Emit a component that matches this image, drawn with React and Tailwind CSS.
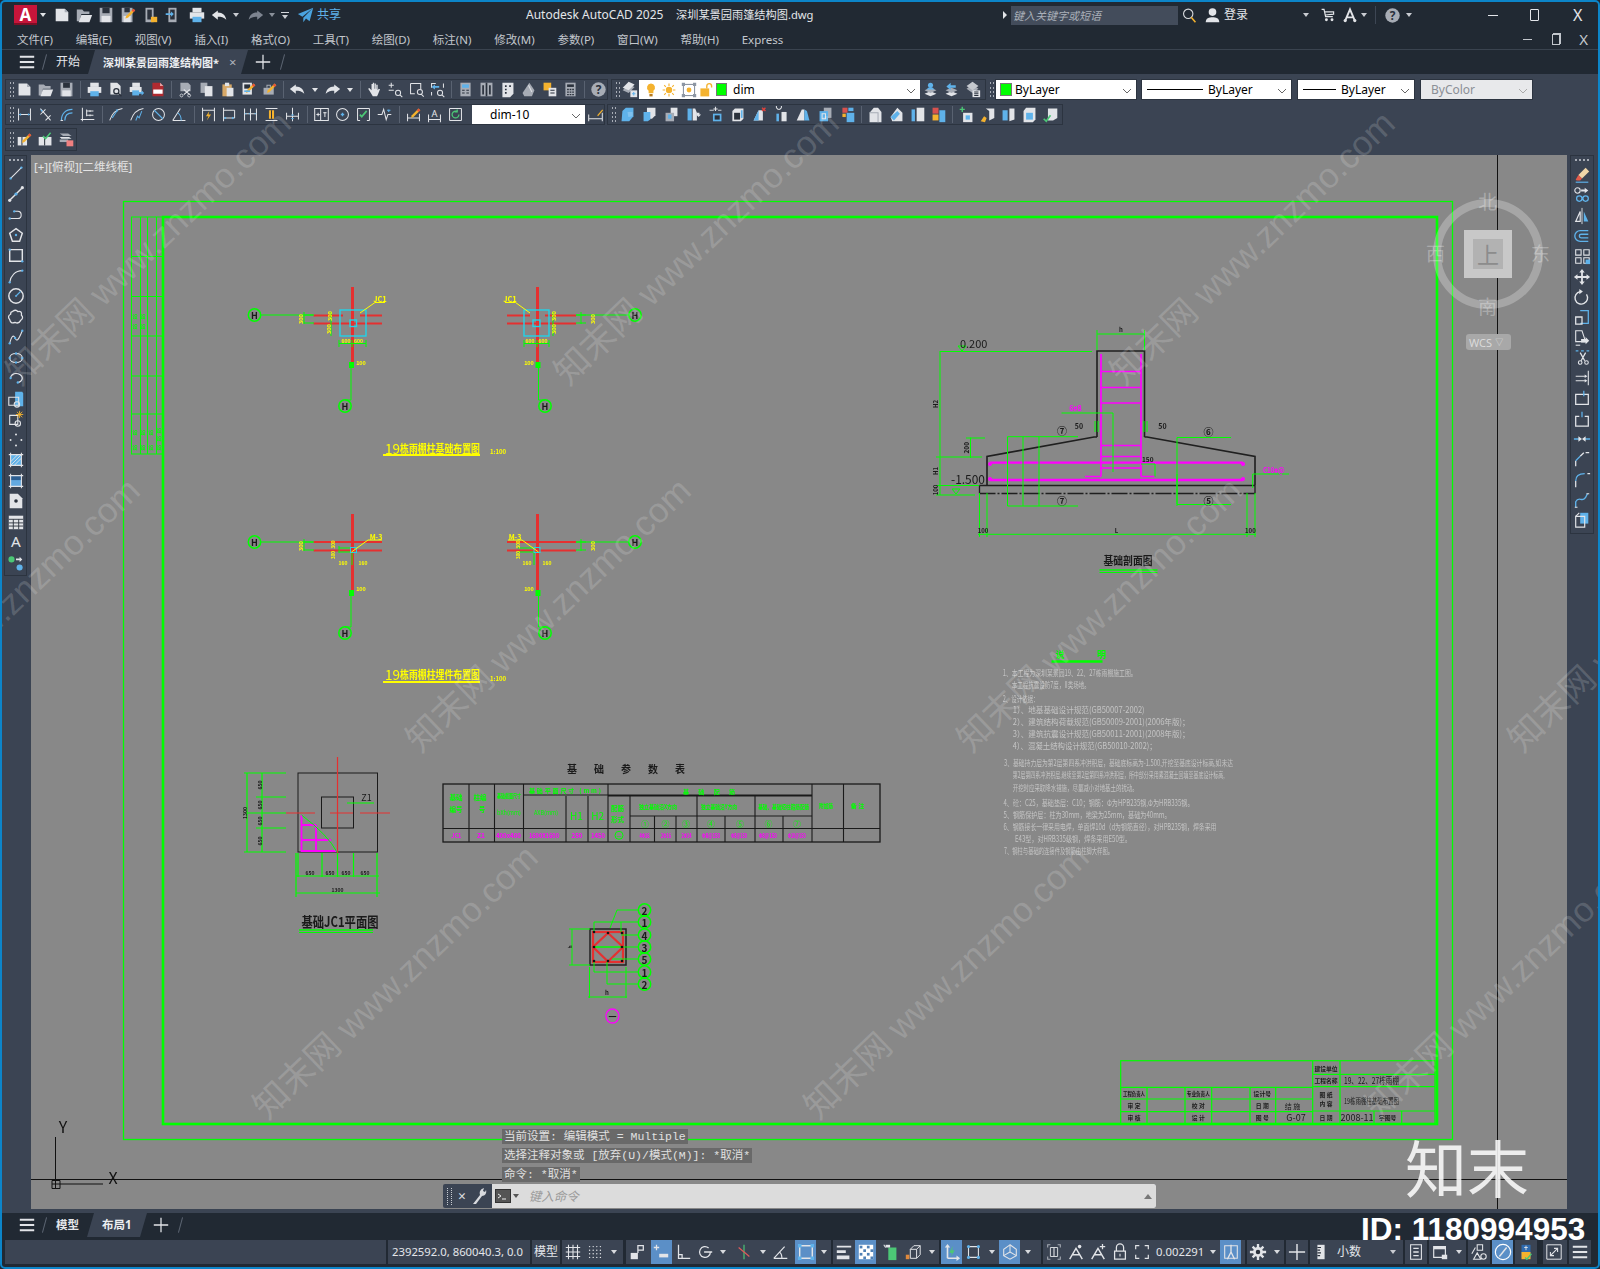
import React from 'react';

const W = '#e2e4e8', G = '#a7acb5', B = '#5fb2ea', Y = '#f4b22e', D = '#2a313c', R = '#d8524e', N = '#4cc776';
const f = (d, c = W) => <path d={d} fill={c} />;
const s = (d, c = W, w = 1.2) => <path d={d} stroke={c} strokeWidth={w} fill="none" />;
const o = (x, y, r = 1.3, c = B) => <circle cx={x} cy={y} r={r} fill={c} />;
const pen = <>{f('M16 3l2 2-8 8-3 1 1-3z', Y)}{f('M16 3l2 2-2 2-2-2z', '#e8503a')}</>;

const I = {
  new: <>{f('M3 3h10l4 4v10H3z')}{f('M13 3v4h4z', G)}</>,
  open: <>{f('M2 4h6l2 2h6v3H7l-2 8H2z', G)}{f('M7 10h12l-3 8H4z')}</>,
  save: <>{f('M3 2h14v16H3z', G)}{f('M6 2h8v6H6z', D)}{f('M5 11h10v7H5z')}</>,
  saveas: <>{f('M3 2h12v16H3z', G)}{f('M6 2h6v5H6z', D)}{f('M5 11h8v7H5z')}{pen}</>,
  phone: <>{f('M5 2h9v16H5z', G)}{f('M7 4h5v11H7z', D)}{f('M11 12h7v6h-7z', Y)}</>,
  phone2: <>{f('M6 2h9v16H6z', G)}{f('M8 4h5v11H8z', D)}{f('M3 8h6V6l3 3-3 3v-2H3z', B)}</>,
  print: <>{f('M5 2h10v5H5z')}{f('M2 7h16v7H2z')}{f('M5 12h10v6H5z', B)}</>,
  preview: <>{f('M4 2h8l4 4v10H4z')}{s('M14 12a3 3 0 1 1-6 0a3 3 0 1 1 6 0M13 14l4 4', D, 1.5)}</>,
  publish: <>{f('M5 2h9v5H5z')}{f('M2 7h14v6H2z')}{f('M5 11h8v6H5z', B)}{f('M12 13h4v-2l3 3-3 3v-2h-4z', B)}</>,
  dwf: <>{f('M4 2h9l4 4v12H4z', '#b02a30')}{f('M13 2v4h4z', '#e5a6a6')}<rect x="5" y="10" width="11" height="5" fill="#fff" /></>,
  cut: <>{f('M4 2h9l3 3v7H4z', G)}{s('M8 10l7 6M15 10l-7 6', W, 1.3)}{s('M7 17a1.7 1.7 0 1 0 0 .1M16 17a1.7 1.7 0 1 0 0 .1', W, 1)}</>,
  copy: <>{f('M3 2h8v12H3z', G)}{f('M8 6h9v12H8z')}</>,
  paste: <>{f('M4 4h11v14H4z', '#d7a867')}{f('M7 2h5v4H7z')}{f('M9 8h8v10H9z')}</>,
  match: <>{f('M3 2h11v14H3z')}{f('M5 4h7v5H5z', D)}{pen}{f('M5 11h7v2H5z', B)}</>,
  brush: <>{f('M3 8h12v8H3z', G)}{s('M7 8v-3h4v3', G)}{pen}</>,
  undo: f('M8 4L1 9.500 8 15v-3.500c4 0 7 .5 10 3.500-1-5-4-8.500-10-8.500z'),
  redo: f('M12 4l7 5.500L12 15v-3.500c-4 0-7 .5-10 3.500 1-5 4-8.500 10-8.500z'),
  redoG: f('M12 4l7 5.500L12 15v-3.500c-4 0-7 .5-10 3.500 1-5 4-8.500 10-8.500z', '#7d8490'),
  pan: f('M8 2h1.500v7H10V3h1.600v6h.5V4.500h1.600V11l1.300-2 1.500.6L14 16l-1 2H8l-3-5-2.500-4 1.400-.8L6.500 11V3.500H8z'),
  zoomrt: <>{s('M5 2v6M2 5h6M2 11h6', W)}{s('M16 14a3 3 0 1 1-6 0a3 3 0 1 1 6 0M15 16l3 3', W)}</>,
  zoomwin: <>{s('M3 3h12v7M3 3v12h5', W)}{s('M17 13a3 3 0 1 1-6 0a3 3 0 1 1 6 0M15.500 15.500l3 3', W)}</>,
  zoomprev: <>{s('M3 8V3h5M17 3v5M3 13v4', W)}{f('M12 6H7V4L3 7l4 3V8h5z', B)}{s('M16 14a3 3 0 1 1-6 0a3 3 0 1 1 6 0M15 16l3 3', W)}</>,
  propsb: <>{f('M4 2h12v16H4z', G)}{f('M6 4h8v4H6z', B)}{s('M6 11h3M11 11h3M6 14h3M11 14h3', D)}</>,
  sheet: <>{f('M3 2h14v16H3z', G)}{s('M10 2v16M6 5v11M14 5v11', D, 2)}</>,
  palette: <>{f('M4 2h13v13l-4 4H4z')}{s('M7 6h2M7 10h2M7 14h2M12 6h2', D, 2)}</>,
  paper: <>{f('M3 14L11 2l6 9-3 7H5z', G)}{s('M10 5l4 8', W)}</>,
  markup: <>{f('M3 2h9v9H3z', Y)}{f('M9 8h9v10H9z')}{s('M11 11h5M11 14h5', D)}</>,
  calc: <>{f('M4 2h12v16H4z', G)}{f('M6 4h8v3H6z', D)}{s('M6 10h2M9 10h2M12 10h2M6 13h2M9 13h2M12 13h2M6 16h2M9 16h2M12 16h2', D, 1.5)}</>,
  help: <><circle cx="10" cy="10" r="8.500" fill={G} /><text x="10" y="15" textAnchor="middle" fontSize="14" fontWeight="700" fill={D}>?</text></>,
  layer: <>{f('M2 11l7-7 7 3-7 7z', G)}{f('M2 8l7-7 7 3-7 7z')}{f('M11 11h8v8h-8z', W)}{s('M13 15h4M15 13v4', B)}</>,
  bulb: <>{f('M10 2a5 5 0 0 1 3 9v3H7v-3a5 5 0 0 1 3-9z', Y)}{f('M8 15h4v3H8z', '#b8791b')}</>,
  sun: <><circle cx="10" cy="10" r="4" fill={Y} />{s('M10 2v3M10 15v3M2 10h3M15 10h3M4 4l2 2M14 14l2 2M4 16l2-2M14 6l2-2', Y, 1.4)}</>,
  freeze: <>{s('M3 3h14v14H3z', '#7c8693')}{f('M1 1h4v4H1zM15 1h4v4h-4zM1 15h4v4H1zM15 15h4v4h-4z', '#8c96a3')}<circle cx="10" cy="10" r="3" fill={Y} /></>,
  lock: <>{s('M11 8V5a3 3 0 0 1 6 0v2', Y, 1.7)}{f('M3 8h11v10H3z', Y)}</>,
  lstack: <>{f('M3 15l7-3 7 3-7 3z')}{f('M3 11l7-3 7 3-7 3z', G)}<circle cx="10" cy="5" r="3" fill={B} />{f('M5 10q5-6 10 0z', B)}</>,
  lprev: <>{f('M3 15l7-3 7 3-7 3z')}{f('M3 11l7-3 7 3-7 3z', G)}{f('M9 2v3h6v3H9v3L4 6.500z', B)}</>,
  lstate: <>{f('M3 9l7-5 7 5-7 5z', G)}{f('M3 6l7-5 7 5-7 5z', '#c4c8ce')}{f('M10 11h9v8h-9z')}{s('M12 13h5M12 15h5M12 17h5', D)}</>,
  dlin: <>{s('M3 3v14M17 3v14M3 10h14', W)}{f('M3 10l3-1.500v3zM17 10l-3-1.500v3z', B)}</>,
  dali: <>{s('M4 3l12 14M4 10l6-6M10 17l6-6', W)}{f('M4 4l3 1-2 2z', B)}</>,
  darc: <>{s('M4 17C4 9 9 4 17 4M8 17C8 11 11 8 17 8', B, 1.4)}{s('M3 17h3', W)}</>,
  dord: <>{s('M4 2v16M2 16h16M9 6h8M9 11h8', W)}{s('M9 4v8M13 5v2M13 10v2', W)}</>,
  drad: <>{s('M2 17C5 8 10 4 17 3', W)}{s('M5 14l6-9', B)}{f('M9 4l3 0-1 3z', B)}</>,
  djog: <>{s('M2 17C5 8 10 4 17 3', W)}{s('M8 17l2-5 2 2 3-8', B)}</>,
  ddia: <>{s('M17 10a7 7 0 1 1-14 0a7 7 0 1 1 14 0', W)}{s('M5 5l10 10', B, 1.3)}</>,
  dang: <>{s('M2 17h15M2 17L11 3', W)}{s('M8 8c3 2 4 5 4 9', B)}</>,
  qdim: <>{s('M3 2v16M17 2v16M3 5h14', W)}{f('M11 6L7 12h3l-2 5 5-7h-3z', Y)}</>,
  dbase: <>{s('M3 2v16M16 5v9M3 5h13M3 14h13', W)}{f('M3 14l3-1.500v3zM16 14l-3-1.500v3z', B)}</>,
  dcont: <>{s('M3 3v14M10 3v14M17 3v14M3 9h14', W)}{f('M3 9l2-1v2zM10 9l-2-1v2zM17 9l-2-1v2z', B)}</>,
  dspace: <>{s('M3 3h14M3 17h14', W)}{f('M7 5h6v10H7z', Y)}{s('M10 5v10', D)}</>,
  dbreak: <>{s('M10 2v16M3 12h14M3 8v8M17 8v8', W)}{f('M10 12l-2-2h4zM10 16l-2-2h4z', B)}</>,
  tol: <>{s('M2 3h16v14H2z', W)}{s('M9 3v14', W)}{s('M4 10h4M6 8v4M12 8h4M14 7v6', W)}</>,
  cmark: <>{s('M17 10a7 7 0 1 1-14 0a7 7 0 1 1 14 0', W)}{s('M8 10h4M10 8v4', B, 1.5)}</>,
  insp: <>{s('M3 3h14M3 17h3M14 17h3M3 3v14M17 3v14', W)}{f('M8 14l-3-3 1.500-1.500L8 11l5-6 1.500 1.500z', N)}</>,
  jog: <>{s('M2 10h5l2-6 3 12 2-6h4', W)}{s('M15 4v3M13 5h4', B)}</>,
  dedit: <>{s('M3 9v9M17 9v9M3 14h14', W)}{pen}</>,
  dtext: <>{s('M3 10v9M17 10v9M3 16h14', W)}<text x="10" y="13" textAnchor="middle" fontSize="11" fill={W}>A</text></>,
  dupd: <>{s('M3 3h14M3 17h14M3 3v14M17 3v14', W)}{s('M14 10a4 4 0 1 1-2-3.400M12 4v3h-3', N, 1.5)}</>,
  dstyle: <>{s('M2 10v8M18 8v10M2 15h16', W)}{f('M12 11l6-7 1 1-6 7z', Y)}</>,
  box1: <>{f('M4 6l4-4h9v10l-5 6H3z', B)}{f('M10 7h6v5l-5 1z', '#7fc2f0')}</>,
  box2: <>{f('M7 2h10v9l-4 4H7z')}{f('M3 7h8v9l-3 2H3z', B)}</>,
  box3: <>{f('M9 2h8v10H9z', W)}{f('M3 8h10v10H3z', G)}{f('M6 10h4v5H6z', B)}</>,
  slice: <>{f('M3 3h5v14H3z', B)}{f('M9 3h3l2 5v9H9z', W)}{f('M14 8h3v2h2l-3 3-3-3h1z', W)}</>,
  addm: <>{s('M10 1v5M7.500 3.500h5', W, 1.3)}{s('M3 5h5M13 5h4', W, 1)}{f('M7 9h10v9H7z', B)}{f('M9 11h6v5H9z', D)}</>,
  cube: <>{f('M4 6l3-3h10v12l-3 3H4z', W)}{f('M6 8h7v8H6z', D)}{f('M14 5h2v9h-2z', B)}</>,
  cubex: <>{f('M3 17L9 5l5 0v12z', W)}{f('M3 17l6-12v12z', B)}{s('M13 2l4 4M17 2l-4 4', '#e2423c', 1.6)}</>,
  rev: <>{s('M7 4a3 3 0 1 0-.1 0', W)}{f('M10 7h6v11h-6z', W)}{f('M4 9h3v9H4z', B)}</>,
  cone: <>{f('M2 17l6-13 3 0v13z', W)}{f('M11 4l3 2 3 11h-6z', B)}</>,
  cube2: <>{f('M8 2h9v12H8z', G)}{f('M3 6h10v12H3z', B)}{s('M6 9h4v6H6z', W)}</>,
  cube3: <>{f('M4 2h6v6H4z', R)}{f('M11 2h6v4h-6z', B)}{f('M9 8h9v11H9z', B)}{f('M4 9h4v4H4z', Y)}</>,
  solid1: <>{f('M3 8l5-6h5l4 5v12H3z', W)}{s('M3 8h10v11', G)}</>,
  solid2: <>{f('M3 13l8-11 6 6v10H5z', W)}{f('M3 13l8-7 3 3-7 8z', B)}</>,
  solid3: <>{f('M9 2h9v16H9z', W)}{f('M3 4h4v14H3z', B)}</>,
  solid4: <>{f('M3 2h7v7H3z', R)}{f('M3 10h7v7H3z', Y)}{f('M11 5h7v14h-7z', B)}</>,
  plus1: <>{s('M5 1v6M2 4h6', N, 1.6)}{f('M6 8h11v11H6z', W)}{f('M9 11h5v5H9z', B)}</>,
  broom: <>{f('M8 3h10v11l-6 3V6z', W)}{f('M2 18l4-6 3 2-2 5z', Y)}</>,
  split: <>{f('M3 5h6v12H3z', B)}{f('M11 3h6v13l-6 2z', W)}</>,
  vcube: <>{f('M3 6l3-4h11v14l-3 3H3z', W)}{f('M6 8h8v8H6z', B)}</>,
  chk: <>{f('M7 3h11v11l-5 3H7z', W)}{s('M2 15l3 3 5-7', N, 2)}</>,
  plate: <>{f('M2 7h11v10H2z')}{s('M7 7v10', D)}{pen}</>,
  platechk: <>{f('M2 7h15v10H2z')}{s('M9 7v10', D)}{s('M7 6l3 3 6-7', N, 1.8)}</>,
  plate2: <>{f('M2 3h10l4 3-10 0z', G)}{f('M2 7h11l3 2H4z')}{f('M2 10h10v3H2z', G)}{f('M10 11h8v7h-8z', '#f08080')}</>,
  line: <>{s('M4 16L16 4')}{o(4, 16)}{o(16, 4)}</>,
  ray: <>{s('M3 17L17 3', W, 1.6)}{o(10, 10, 1.8)}{o(3, 17, 1.8, W)}{o(17, 3, 1.8, W)}</>,
  pline: <>{s('M3 15h9c5 0 5-8 0-8H8')}{o(3, 15)}{o(8, 7)}</>,
  pgon: <>{s('M10 3l7 5-3 9H6L3 8z', W, 1.6)}{o(10, 10)}</>,
  rect: <>{s('M3 4h14v13H3z', W, 1.6)}{o(3, 4)}{o(17, 17)}</>,
  arc: <>{s('M3 17C4 10 9 4 17 4')}{o(3, 17)}{o(17, 4)}</>,
  circ: <>{s('M18 10a8 8 0 1 1-16 0a8 8 0 1 1 16 0', W, 1.6)}{s('M10 10l5-5', B)}{o(10, 10, 1)}</>,
  cloud: s('M6 4q4-3 6 0q5-1 4 4q3 3-1 6q-2 4-6 2q-5 2-6-3q-3-4 1-6q0-3 2-3z', W, 1.4),
  spline: <>{s('M3 17c2-8 4-10 6-6s3 4 8-8', W)}{o(3, 17)}{o(9, 11)}{o(17, 3)}</>,
  ell: <>{s('M17 10c0 3-3 5-7 5s-7-2-7-5 3-5 7-5 7 2 7 5z', W, 1.3)}{o(3, 10)}{o(17, 10)}{o(10, 5)}{o(10, 15)}</>,
  ella: <>{s('M4 10c0-3 3-5 6-5s7 2 7 5-3 5-5 5', W, 1.3)}{o(4, 10)}{o(12, 15)}</>,
  ins: <>{f('M9 2h8l1 2v14H9z', B)}{s('M2 8h11v9H2z', W)}{s('M14 16a3 3 0 1 1-6 0a3 3 0 1 1 6 0', W)}</>,
  blk: <>{s('M3 6h9v10H3z', W)}{s('M15 15a3 3 0 1 1-6 0a3 3 0 1 1 6 0', W)}{s('M14 1v8M10 5h8M11 2l6 6M17 2l-6 6', Y, 1)}</>,
  point: <>{o(10, 4, 1.1, W)}{o(4, 10, 1.1, W)}{o(16, 10, 1.1, W)}{o(10, 16, 1.1, W)}</>,
  hatch: <>{f('M4 4h12v12H4z', B)}{s('M4 12l8-8M4 16l12-12M8 16l8-8', W, 1)}{s('M2 4h16M2 16h16M4 2v16M16 2v16', W)}</>,
  grad: <>{f('M4 4h12v12H4z', '#63a9e0')}{f('M4 4h12v5H4z', '#2d5f92')}{s('M2 4h16M2 16h16M4 2v16M16 2v16', W)}</>,
  region: <>{f('M3 2h9l5 5v11H3z')}<circle cx="10" cy="10" r="2" fill={D} /></>,
  table: <>{f('M2 3h16v15H2z')}{s('M2 7h16M2 11h16M2 14.500h16M7 7v11M13 7v11', D, 1)}</>,
  txt: <text x="10" y="16" textAnchor="middle" fontSize="17" fill={W}>A</text>,
  addsel: <>{o(5, 6, 3.400, N)}{o(14, 15, 3.400, B)}{f('M10 5h4V3l3 3-3 3V7h-4z')}</>,
  erase: <>{f('M14 2l4 4-8 8-4-4z', '#f0d6a8')}{f('M6 10l4 4-2 2H4l-1-1z', '#e35b4a')}{s('M3 18h14', B, 1.3)}</>,
  rcopy: <>{s('M8 5a3 3 0 1 1-6 0a3 3 0 1 1 6 0', W)}{f('M9 4h4V2l4 3-4 3V6H9z')}{s('M10 14a3 3 0 1 1-6 0a3 3 0 1 1 6 0M17 14a3 3 0 1 1-6 0a3 3 0 1 1 6 0', B, 1.4)}</>,
  mirror: <>{s('M10 1v18', W, 1)}{s('M8 5v11H3z', W, 1.3)}{f('M12 5v11h5z', B)}</>,
  offset: s('M17 4H8a6 6 0 0 0 0 12h9M17 8H9a2 2 0 0 0 0 4h8', B, 1.5),
  array: <>{s('M3 3h6v6H3zM12 3h6v6h-6zM3 12h6v6H3zM12 12h6v6h-6z', W, 1.2)}{f('M14 14h5v5h-5z', B)}</>,
  move: f('M10 1l3 4h-2v4h4V7l4 3-4 3v-2h-4v4h2l-3 4-3-4h2v-4H5v2l-4-3 4-3v2h4V5H7z'),
  rotate: <>{s('M15 7a7 7 0 1 1-7-3', W, 1.5)}{f('M7 1l4 3-4 3z')}</>,
  scale: <>{s('M8 3h9v14H8', B, 1.4)}{s('M3 10h7v8H3z', W, 1.4)}</>,
  stretch: <>{s('M3 2h7l4 12H3z', W)}{f('M9 11h5V9l4 4-4 4v-2H9z')}{s('M3 18h5', W)}</>,
  trim: <>{s('M3 2h3M9 2h3M15 2h3', B, 1.3)}{s('M8 4l5 9M14 4l-5 9', W, 1.4)}{s('M10 15a2 2 0 1 1-4 0a2 2 0 1 1 4 0M17 15a2 2 0 1 1-4 0a2 2 0 1 1 4 0', W)}</>,
  extend: <>{s('M17 2v16', W)}{s('M3 8h11M3 13h11', W)}{f('M13 6l3 2-3 2zM13 11l3 2-3 2z', W)}</>,
  brkp: <>{s('M3 6h14v11H3z', W, 1.4)}{s('M12 2v6', B, 1.4)}</>,
  brk: <>{s('M7 7H3v11h14V7h-4', W, 1.4)}{s('M10 2v6', B, 1.4)}</>,
  join: <>{s('M1 10h6M13 10h6', B, 1.6)}{f('M6 7l4 3-4 3zM14 7l-4 3 4 3z', W)}</>,
  chamfer: <>{s('M3 18v-6M8 7l4-4M14 3h4', W, 1.4)}{s('M3 12l5-5', B, 1.4)}</>,
  fillet: <>{s('M3 18v-7M16 3h3', W, 1.4)}{s('M3 11q0-8 10-8', B, 1.4)}</>,
  blend: <>{s('M3 18v-6c4-8 8 4 13-9', B, 1.5)}{s('M15 3h3M2 18h3', W)}</>,
  explode: <>{f('M8 2h9v12H8z', B)}{s('M3 6h10v12H3z', W, 1.3)}{s('M7 2l-4 4', W)}</>,
  grid: s('M5 2v16M10 2v16M15 2v16M2 5h16M2 10h16M2 15h16', W, 1.2),
  snap: <>{[4, 8, 12, 16].map(y => [4, 8, 12, 16].map(x => <circle key={x + '-' + y} cx={x} cy={y} r=".8" fill={W} />))}</>,
  infer: <>{f('M3 11h8v7H3z')}{s('M11 11V3h6v5h-6', W, 1.4)}</>,
  dyn: <>{s('M5 2v6M2 5h6', W, 1.4)}{f('M8 12h10v4H8z')}</>,
  ortho: s('M5 2v15h13M5 13h4v4', W, 1.4),
  polar: <>{s('M16 10a6 6 0 1 1-2-4.500M9 10h9', W, 1.4)}</>,
  iso: <>{s('M10 2v16', N, 1.3)}{s('M4 5l12 10', '#e05b5b', 1.3)}</>,
  ang: s('M2 17h15M2 17L14 4M8 10c2 1 3 4 3 7', W, 1.3),
  ucsb: <>{s('M3 3h14v14H3z', W, 1.6)}{f('M1 1h4v4H1zM15 1h4v4h-4zM1 15h4v4H1zM15 15h4v4h-4z', B)}</>,
  lw: <>{f('M2 3h16v2H2zM2 8h10v3H2zM2 14h14v4H2z')}</>,
  trans: <><rect x="2" y="2" width="16" height="16" fill="#fff" />{[3, 7, 11, 15].map(y => [3, 7, 11, 15].map(x => (x + y) % 8 === 6 ? <rect key={x + '-' + y} x={x} y={y} width="3" height="3" fill="#4f80b5" /> : null))}</>,
  cycle: <>{s('M2 2l2 3', W)}{f('M7 5h9v14H7z', N)}{f('M4 2h5v3H4z', W)}</>,
  o3d: <>{s('M7 7l4-4h7v10l-4 4H7zM7 7h7v10M14 7l4-4', W, 1.1)}{f('M2 13h4v5H2z', '#e0893c')}</>,
  ducs: <>{s('M5 17V4M5 17h12', W, 1.8)}{f('M5 1l3 4H2zM19 17l-4 3v-6z')}{f('M11 3L7 11h3l-1 4 4-7h-3z', N)}</>,
  filt: <>{s('M5 4h11v12H5z', W, 1.2)}{o(5, 4, 1.7)}{o(16, 4, 1.7)}{o(5, 16, 1.7)}{o(16, 16, 1.7)}</>,
  gizmo: <>{s('M10 2l7 5v7l-7 4-7-4V7z', W, 1.2)}{s('M10 10V2M10 10l7 4M10 10l-7 4', W, 1.2)}</>,
  ann: <>{s('M3 5V2h3M14 2h3v3M3 15v3h3M14 18h3v-3', G, 1.2)}{s('M6 5h8v10H6z', W, 1)}{s('M10 5v10', W)}</>,
  annA: <>{s('M3 18l7-12 7 12M6 13h8', W, 1.6)}<circle cx="14" cy="4" r="2" fill={W} /></>,
  annB: <>{s('M3 18l7-12 7 12M6 13h8', W, 1.6)}{s('M15 1v6M12 4h6', W, 1.4)}</>,
  lockS: <>{s('M6 9V5a4 4 0 0 1 8 0v4', W, 1.4)}{s('M4 9h12v9H4z', W, 1.4)}{s('M10 12v3', W)}</>,
  fulls: s('M3 7V3h4M13 3h4v4M3 13v4h4M13 17h4v-4', W, 1.3),
  annb: <>{s('M3 3h14v14H3z', W, 1.2)}{s('M6 18l4-8 4 8M10 2v8', W, 1.5)}</>,
  gear: <><circle cx="10" cy="10" r="5.500" fill={W} />{s('M10 1v18M1 10h18M4 4l12 12M16 4L4 16', W, 2.6)}<circle cx="10" cy="10" r="2.500" fill={D} /></>,
  plus: s('M10 1v18M1 10h18', W, 1.6),
  ruler: <>{f('M6 2h8v16H6z', W)}{s('M6 5h4M6 8h3M6 11h4M6 14h3', D, 1.3)}</>,
  qprop: <>{s('M4 2h12v16H4z', W, 1.2)}{s('M7 6h6M7 10h6M7 14h6', W, 1.4)}</>,
  lay: <>{s('M3 4h13v12H3z', W, 1.3)}{f('M3 4h13v3H3z')}{f('M12 13h6v5h-6z', W)}</>,
  iso2: <>{s('M8 2h6v6H8zM2 12l4-7M4 18l4-7 4 7z', W, 1.2)}{s('M18 15a3 3 0 1 1-6 0a3 3 0 1 1 6 0', W, 1.2)}</>,
  hw: <><circle cx="10" cy="10" r="8.500" fill="none" stroke="#fff" strokeWidth="1.300" />{s('M6 15L14 5', W, 1.6)}</>,
  clean: <>{f('M5 2h10v14H5z', '#2f6aae')}{f('M5 10h10v8H5z', Y)}{s('M9 16l2 2 5-6', N, 1.6)}{s('M10 3v5M8 5h4', W, 1)}</>,
  fit: <>{s('M2 2h16v16H2z', W, 1.1)}{s('M6 14l8-8M10 6h4v4M6 10v4h4', W, 1.2)}</>,
  menu: f('M2 3h16v2.400H2zM2 8.800h16v2.400H2zM2 14.600h16V17H2z'),
  mag: <>{s('M14 8a5.500 5.500 0 1 1-11 0a5.500 5.500 0 1 1 11 0', '#d8dade', 1.3)}{s('M12 12l5 6', Y, 1.8)}</>,
  person: <><circle cx="10" cy="6" r="4.500" fill={W} />{f('M2 18c0-5 4-6 8-6s8 1 8 6z')}</>,
  cart: <>{s('M2 3h3l2 9h9M5 6h12v3l-10 1', W, 1.5)}<circle cx="8" cy="16" r="1.800" fill={W} /><circle cx="15" cy="16" r="1.800" fill={W} /></>,
  acad: <>{s('M4 17L10 3l6 14M6 13h8', W, 2.4)}<circle cx="4" cy="17" r="2" fill={W} /><circle cx="16" cy="17" r="2" fill={W} /></>,
  plane: f('M18 2L1 9l5 3zM18 2L7 13v5l3-4 4 3z', '#4aa3df'),
};

const Ic = ({ n, s: z = 20 }) => <svg width={z} height={z} viewBox="0 0 20 20" className="shrink-0">{I[n]}</svg>;
const Cr = ({ c = 'border-t-[#c9ccd2]' }) => <span className={`block w-0 h-0 border-x-[3px] border-x-transparent border-t-[4px] ${c}`} />;
const T = ({ n, z = 17 }) => <span className="w-[21px] h-full flex items-center justify-center shrink-0"><Ic n={n} s={z} /></span>;
const T22 = ({ n }) => <span className="w-[22px] h-full flex items-center justify-center shrink-0"><Ic n={n} s={17} /></span>;
const Sp = ({ w8 }) => <span className={`${w8 ? 'w-[8px]' : 'w-[7px]'} h-full flex items-center justify-center shrink-0`}><span className="w-px h-[17px] bg-[#596271]" /></span>;
const TC = () => <span className="w-[14px] h-full flex items-center justify-center shrink-0"><Cr c="border-t-[#e2e4e8]" /></span>;
const Grip = () => <span className="w-[8px] h-[15px] shrink-0 ml-[2px] border-x-2 border-dotted border-[#a7acb5] mr-[-2px] scale-x-50" />;
const Bar = ({ className, children }) => <div className={`flex items-center h-full border border-[#2c3440] bg-[#3b4453] ${className}`}>{children}</div>;
const Sel = ({ className, children }) => (
  <div className={`relative flex items-center h-full bg-white text-black text-[12px] ${className}`}>
    {children}
    <svg width="10" height="6" viewBox="0 0 10 6" className="absolute right-[4px] top-[8px]"><path d="M1 1l4 4 4-4" stroke="#666" fill="none" /></svg>
  </div>
);

const Blue = ({ n }) => <span className="w-[21px] h-full flex items-center justify-center bg-[#5b8fc7] shrink-0"><Ic n={n} s={18} /></span>;
const SI = ({ n }) => <span className="w-[22px] h-full flex items-center justify-center shrink-0"><Ic n={n} s={18} /></span>;
const SC = () => <span className="w-[15px] h-full flex items-center justify-center shrink-0"><Cr c="border-t-[#d8dade]" /></span>;
const Grp = ({ className, children }) => <div className={`flex items-center h-full bg-[#3b4453] shrink-0 ${className || ''}`}>{children}</div>;

const LEFT = ['line', 'ray', 'pline', 'pgon', 'rect', 'arc', 'circ', 'cloud', 'spline', 'ell', 'ella', 'ins', 'blk', 'point', 'hatch', 'grad', 'region', 'table', 'txt', 'addsel'];
const RIGHT = ['erase', 'rcopy', 'mirror', 'offset', 'array', 'move', 'rotate', 'scale', 'stretch', 'trim', 'extend', 'brkp', 'brk', 'join', 'chamfer', 'fillet', 'blend', 'explode'];
const MENU = ['文件(F)', '编辑(E)', '视图(V)', '插入(I)', '格式(O)', '工具(T)', '绘图(D)', '标注(N)', '修改(M)', '参数(P)', '窗口(W)', '帮助(H)', 'Express'];
const MARKS = [[12, 378], [560, 378], [1116, 378], [-139, 745], [412, 745], [963, 745], [1514, 745], [-292, 1112], [259, 1112], [810, 1112], [1371, 1112]];

/* ---- drawing helpers ---- */
const GRN = '#00ff00', YEL = '#ffff00', RED = '#e53030', MAG = '#ff00ff', CY = '#22d3e8', BK = '#1a1a1a';
const Tx = ({ x, y, z = 6, c = YEL, w, r, b, sp, a = 'middle', children }) => (
  <text x={x} y={y} fontSize={z} fill={c} textAnchor={a} dominantBaseline="central" fontWeight={b ? 700 : 400}
    textLength={w} lengthAdjust={w ? (sp ? 'spacing' : 'spacingAndGlyphs') : undefined} transform={r ? `rotate(${r} ${x} ${y})` : undefined}>{children}</text>
);
const Ln = ({ d, c = GRN, w = 1 }) => <path d={d} stroke={c} strokeWidth={w} fill="none" />;
const Bub = ({ x, y, t, c = GRN, z = 9 }) => <><circle cx={x} cy={y} r="6.200" fill="none" stroke={c} strokeWidth="1.500" /><Tx x={x} y={y} z={z} c={BK} b>{t}</Tx></>;
const Title19 = ({ y, t }) => <>
  <Tx x={385} y={y} z={14} w={15} a="start">19</Tx>
  <Tx x={400} y={y} z={11} w={80} a="start" b>{t}</Tx>
</>;

function Drawing() {
  return (
    <svg viewBox="31 155 1536 1054" className="absolute inset-0 w-full h-full blur-[0.3px] [font-family:'Noto_Sans_CJK_SC','Noto_Sans',sans-serif]">
      {/* frames */}
      <rect x="123.500" y="201.500" width="1329" height="938" fill="none" stroke={GRN} strokeWidth="1.300" />
      <rect x="163" y="217" width="1274" height="907" fill="none" stroke={GRN} strokeWidth="2.600" />
      {/* revision strip */}
      <Ln d="M131.500 217V454M140.500 217V454M147.500 217V454M156.500 217V454M131 217H163M131 256.500H163M131 296.500H163M131 336H163M131 376H163M131 414H163M131 454H163" />
      {[[135, 315], [143, 315], [135, 325], [143, 325], [135, 431], [143, 431], [151, 431], [159, 429], [135, 446], [143, 446], [151, 446], [159, 437], [159, 446]].map(([x, y]) => <Tx key={x + '.' + y} x={x} y={y} z={5} c={GRN} b>设</Tx>)}

      {/* plan 1 */}
      <Ln d="M352.500 287V364" c={RED} w={3} />
      <Ln d="M313.500 315.500H343M360 315.500H382M313.500 323.500H382" c={RED} w={1.800} />
      <Ln d="M261 315H313M351 364V400M345 400H351" />
      <Ln d="M304 312V324M304 315H314M304 323H314M331 312V336M339 343.500H366M339 340V347M352 340V347M366 340V347" w={1} />
      <rect x="340" y="310" width="26" height="26" fill="none" stroke={CY} strokeWidth="1.400" />
      <rect x="350" y="320" width="6.500" height="6.500" fill="none" stroke={CY} strokeWidth="1.400" />
      <Ln d="M360 313L375 302.500H385" c={YEL} />
      <Tx x={380} y={298} z={7.500} b>JC1</Tx>
      <Bub x={254.500} y={315} t="H" /><Bub x={345} y={406} t="H" />
      <Tx x={301} y={319} z={5.500} r={-90} b>300</Tx><Tx x={329.500} y={316} z={5.500} r={-90} b>300</Tx><Tx x={328.700} y={329} z={5.500} r={-90} b>300</Tx>
      <Tx x={346} y={340} z={5} b>600</Tx><Tx x={358.500} y={340} z={5} b>600</Tx><Tx x={361} y={362.500} z={5.500} b>100</Tx>
      <rect x="349" y="362" width="5" height="6" fill={GRN} />

      {/* plan 2 */}
      <Ln d="M537.500 287V364" c={RED} w={3} />
      <Ln d="M507 315.500H530M545 315.500H576M507 323.500H576" c={RED} w={1.800} />
      <Ln d="M576 315H629M538.500 364V400M538.500 400H545" />
      <Ln d="M581 312V324M576 315H586M576 323H586M553 312V336M524 343.500H549M524 340V347M537 340V347M549 340V347" w={1} />
      <rect x="524" y="310" width="25" height="26" fill="none" stroke={CY} strokeWidth="1.400" />
      <rect x="533" y="320" width="7" height="6.500" fill="none" stroke={CY} strokeWidth="1.400" />
      <Ln d="M530 313L515.500 302.500H505" c={YEL} />
      <Tx x={510} y={298} z={7.500} b>JC1</Tx>
      <Bub x={635} y={315} t="H" /><Bub x={545} y={406} t="H" />
      <Tx x={593} y={319} z={5.500} r={-90} b>300</Tx><Tx x={554} y={316} z={5.500} r={-90} b>300</Tx><Tx x={554} y={329} z={5.500} r={-90} b>300</Tx>
      <Tx x={530} y={340} z={5} b>600</Tx><Tx x={543} y={340} z={5} b>600</Tx><Tx x={529} y={362.500} z={5.500} b>100</Tx>
      <rect x="535.500" y="362" width="5" height="6" fill={GRN} />

      {/* title 1 */}
      <Title19 y={448} t="栋雨棚柱基础布置图" />
      <Ln d="M383 455H480" c={YEL} w={2} />
      <Tx x={498} y={451} z={6} b>1:100</Tx>

      {/* plan 3 */}
      <Ln d="M352.500 514V593" c={RED} w={3} />
      <Ln d="M313.500 542H382M313.500 550.500H382" c={RED} w={1.800} />
      <Ln d="M261 542H313M351 593V627M345 627H351" />
      <Ln d="M304 539V551M304 542H314M304 550H314M339 548H350M339 552H350M339 546V553M352 552V565" w={1} />
      <rect x="350.500" y="547.500" width="6" height="5" fill="none" stroke={CY} />
      <Ln d="M351.500 552L368 540H382" c={YEL} />
      <Tx x={376} y={537} z={7} b>M-3</Tx>
      <Bub x={254.500} y={542} t="H" /><Bub x={345} y={633} t="H" />
      <Tx x={301} y={546} z={5.500} r={-90} b>300</Tx><Tx x={333} y={544.500} z={4.500} r={-90} b>300</Tx><Tx x={333} y={555} z={4.500} r={-90} b>300</Tx>
      <Tx x={343} y={562} z={5} b>160</Tx><Tx x={363} y={562} z={5} b>160</Tx><Tx x={361} y={589} z={5.500} b>100</Tx>
      <rect x="349" y="590" width="5" height="6" fill={GRN} />

      {/* plan 4 */}
      <Ln d="M537.500 514V593" c={RED} w={3} />
      <Ln d="M507 542H576M507 550.500H576" c={RED} w={1.800} />
      <Ln d="M576 542H629M538.500 593V627M538.500 627H545" />
      <Ln d="M581 539V551M576 542H586M576 550H586M518 548H534M518 552H534M534 552V565" w={1} />
      <rect x="534" y="547.500" width="6" height="5" fill="none" stroke={CY} />
      <Ln d="M538.500 552L522 540H508" c={YEL} />
      <Tx x={515} y={537} z={7} b>M-3</Tx>
      <Bub x={635} y={542} t="H" /><Bub x={545} y={633} t="H" />
      <Tx x={593} y={546} z={5.500} r={-90} b>300</Tx><Tx x={518} y={544.500} z={4.500} r={-90} b>300</Tx><Tx x={518} y={555} z={4.500} r={-90} b>300</Tx>
      <Tx x={527} y={562} z={5} b>160</Tx><Tx x={547} y={562} z={5} b>160</Tx><Tx x={529} y={589} z={5.500} b>100</Tx>
      <rect x="535.500" y="590" width="5" height="6" fill={GRN} />

      {/* title 2 */}
      <Title19 y={674} t="栋雨棚柱埋件布置图" />
      <Ln d="M383 682H480" c={YEL} w={2} />
      <Tx x={498} y={678.500} z={6} b>1:100</Tx>

      {/* JC1 plan */}
      <rect x="298" y="773" width="79.500" height="79" fill="none" stroke={BK} strokeWidth="1" />
      <rect x="321.500" y="797" width="32" height="31" fill="none" stroke={BK} strokeWidth="1" />
      <Ln d="M337.500 757V855M286 813H315M330 813H353M360 813H390" c={RED} w={1.200} />
      <Ln d="M301.500 815V851H337M301.500 825H316M301.500 840H331M316 825V851" c={MAG} w={1.800} />
      <Ln d="M301.500 815Q328 835 337 852" />
      <Ln w={1.200} d="M247 773V852M262 773V852M244 773H286M256 797H286M247 813H286M256 828H286M244 852H286M298 853V877M322 853V877M337.500 853V877M353.500 853V877M377 853V897M296 853V897M296 876H379M296 893H380" />
      <Ln d="M347 803H374" />
      <Tx x={366.500} y={797} z={9} c={BK}>Z1</Tx>
      {[785, 805, 821, 841].map(y => <Tx key={y} x={259} y={y} z={5} c={BK} r={-90} b>650</Tx>)}
      <Tx x={244} y={813} z={5} c={BK} r={-90} b>1300</Tx>
      {[310, 330, 346, 365].map(x => <Tx key={x} x={x} y={872} z={5} c={BK} b>650</Tx>)}
      <Tx x={337.500} y={889} z={5} c={BK} b>1300</Tx>
      <Tx x={340} y={921} z={14} c={BK} w={77} b>基础JC1平面图</Tx>
      <Ln d="M299 930H373" w={1.500} /><Ln d="M299 932.500H373" w={1} />

      {/* table */}
      <Tx x={626} y={768} z={10} c={BK} b w={118} sp>基础参数表</Tx>
      <rect x="443" y="784" width="437" height="58" fill="none" stroke={BK} strokeWidth="1.300" />
      <Ln c={BK} w={1.100} d="M443 828.500H880M523.500 795H812M608 796H812M630 816H812M469 784V842M494.500 784V842M523.500 784V842M566 796V842M588 796V842M608 784V842M630 796V842M654.500 816V842M676 816V842M697 796V842M725 816V842M755 796V842M783 816V842M812 784V842M843.500 784V842" />
      <Tx x={456} y={797} z={6.500} c={GRN} b>基础</Tx><Tx x={456} y={809} z={6.500} c={GRN} b>编号</Tx>
      <Tx x={480} y={797} z={6.500} c={GRN} b>柱编</Tx><Tx x={482} y={809} z={6.500} c={GRN} b>号</Tx>
      <Tx x={509} y={795} z={6} c={GRN} w={24} b>基础截面尺寸</Tx><Tx x={509} y={812} z={6} c={GRN} w={24}>bXh(mm)</Tx>
      <Tx x={565} y={790.500} z={6} c={GRN} w={72} sp b>基础平面尺寸 (mm)</Tx>
      <Tx x={546} y={812} z={6} c={GRN} w={24}>AXB(mm)</Tx>
      <Tx x={576.500} y={815} z={10} c={GRN}>H1</Tx><Tx x={597.700} y={815} z={10} c={GRN}>H2</Tx>
      <Tx x={617.600} y={808} z={6.500} c={GRN} b>配筋</Tx><Tx x={617.600} y={819} z={6.500} c={GRN} b>形式</Tx>
      <Tx x={709} y={791} z={6} c={GRN} w={52} sp b>基础配筋</Tx>
      <Tx x={658} y={806} z={6} c={GRN} w={38} b>独立基础沿X方向</Tx>
      <Tx x={719} y={806} z={6} c={GRN} w={36} b>独立基础沿Y方向</Tx>
      <Tx x={783.700} y={806} z={6} c={GRN} w={51} b>基础、基础短柱箍筋配筋</Tx>
      <Tx x={826} y={805} z={6} c={GRN} w={14} b>附加筋</Tx><Tx x={857.500} y={805} z={6} c={GRN} b>备 注</Tx>
      {[[645, '①'], [665.500, '②'], [686, '③'], [711, '④'], [740, '⑤'], [768.500, '⑥'], [797, '⑦']].map(([x, t]) => <Tx key={x} x={x} y={823} z={8} c={GRN}>{t}</Tx>)}
      {[[456.300, 'JC1', 10], [481, 'Z1', 8], [508.400, '400x400', 25], [544, '1600X1600', 30], [577, '250', 11], [598, '1450', 14], [644.500, '4Φ16', 10], [666, '2Φ16', 10], [686.600, '2Φ14', 10], [711, 'Φ8@150', 18], [739, 'Φ8@150', 16], [767.700, 'Φ8@150', 18], [796.700, 'Φ10@150', 18]].map(([x, t, w]) => <Tx key={x} x={x} y={835.300} z={6.500} c={MAG} w={w} b>{t}</Tx>)}
      <circle cx="619" cy="835.300" r="4" fill="none" stroke={GRN} />
      <Tx x={619} y={835.300} z={5} c={GRN}>一</Tx>

      {/* column section */}
      <rect x="590" y="929" width="36" height="36" fill="none" stroke="#222" strokeWidth="1.500" />
      <rect x="593" y="932" width="30" height="30" fill="none" stroke={RED} strokeWidth="2.200" />
      <path d="M608 933L623 947L608 961.500L593 947Z" fill="none" stroke={RED} strokeWidth="2.200" />
      <Ln d="M593 947H623M610 928L617 910H638M594 922H638M594 922V932M621 922V932M621 935H638M593 947H638M612 959H638M594 962V972H638M607 962V984H638M572 929V965M569 929H590M569 965H590M589.500 967V998M626 967V998M588 997H627" />
      {[[910, 2], [922, 1], [935, 4], [947, 3], [959, 5], [972, 1], [984, 2]].map(([y, t]) => <Bub key={y} x={644.500} y={y} t={t} z={10} />)}
      {[[594, 932], [608, 933], [622, 933], [594, 947], [622, 947], [594, 961], [608, 961], [622, 961]].map(([x, y]) => <circle key={x + '/' + y} cx={x} cy={y} r="1.300" fill="#111" />)}
      <Tx x={569} y={947} z={5} c={BK} r={-90} b>h</Tx><Tx x={607} y={992} z={6} c={BK} b>h</Tx>
      <ellipse cx="612.400" cy="1016" rx="6.500" ry="7" fill="none" stroke={MAG} strokeWidth="1.300" />
      <Tx x={612.400} y={1016} z={8} c={BK} b>一</Tx>

      {/* foundation section */}
      <Ln c="#1f1f1f" w={1.600} d="M1097 437V351H1144.500V437M1097 437H1094L987 456.500V485.500M1144.500 437H1147L1255 456.500V485.500" />
      <Ln c="#1f1f1f" w={1.300} d="M979.500 485.500H1255M979.500 485.500V493.500M1255 485.500V493.500" />
      <path d="M979.500 493.500H1255" stroke="#1f1f1f" strokeWidth="1.300" strokeDasharray="16 2 2 2" />
      <Ln c={MAG} w={1.700} d="M1101 354V476.500M1141 354V476.500M1101 371.500H1141M1101 387.500H1141M1101 403H1141M1101 445.500H1141M1101 456.500H1141M1101 468H1141M1085 476.500H1101M1141 476.500H1155" />
      <Ln c={MAG} w={2.300} d="M990 462.700H1243M990 480H1243" />
      <circle cx="990" cy="464" r="2" fill={MAG} /><circle cx="1243" cy="464" r="2" fill={MAG} /><circle cx="990" cy="479" r="2" fill={MAG} /><circle cx="1243" cy="479" r="2" fill={MAG} />
      <Ln d="M940 351.500H1092M940 351V495M936 457H982M936 485.500H979M936 495H975M970.500 437.500V458M966 438H985" />
      <Ln d="M1097 330V350M1144.500 330V350M1097 334H1144.500M1061.500 413H1113V472M1095 421V432M1098 421V432M1144 421V432M1147 421V432" />
      <Ln d="M1007.500 436.700H1078M1007.500 436.700V506M1023 436.700V506M1039 436.700V506M1007.500 506H1078M1177 437.500V506M1177 437.500H1231M1177 504.500H1231M1177 474V504M1141 464H1155V476.700M1252.700 474H1289M1252.700 474V488" />
      <Ln d="M978 534.300H1256M979.500 493V537M987 493V537M1247 493V537M1255 493V537" />
      <path d="M958 346l4 5 4-5z" fill="none" stroke={GRN} />
      <path d="M952 489l4 5 4-5z" fill="none" stroke={GRN} />
      <Tx x={973.700} y={343} z={11} c={BK}>0.200</Tx>
      <Tx x={968} y={478} z={12} c={BK} w={34}>-1.500</Tx>
      <Tx x={935.700} y={404} z={6} c={BK} r={-90} b>H2</Tx><Tx x={935.700} y={471} z={6} c={BK} r={-90} b>H1</Tx><Tx x={935.700} y={490} z={6} c={BK} r={-90} b>100</Tx>
      <Tx x={966} y={447.700} z={6.500} c={BK} r={-90} b>200</Tx>
      <Tx x={1121} y={329} z={6} c={BK} b>h</Tx>
      <Tx x={1075.400} y={408} z={7} c={MAG} b>6#8</Tx>
      <Tx x={1079} y={426} z={7} c={BK} b>50</Tx><Tx x={1162.500} y={426} z={7} c={BK} b>50</Tx>
      <Tx x={1147.800} y={459} z={6.500} c={BK} b>150</Tx>
      {[[1062, 430.700, '⑦'], [1208.500, 431, '⑥'], [1062, 500.300, '⑦'], [1208.500, 500, '⑤']].map(([x, y, t]) => <Tx key={y + '' + x} x={x} y={y} z={10} c={BK} b>{t}</Tx>)}
      <Tx x={1273.600} y={470} z={7} c={MAG} w={21} b>C10#@</Tx>
      <Tx x={983} y={530} z={6} c={BK} b>100</Tx><Tx x={1250.400} y={530} z={6} c={BK} b>100</Tx><Tx x={1116.500} y={530} z={6} c={BK} b>L</Tx>
      <Tx x={1128} y={560} z={11} c={BK} b w={49}>基础剖面图</Tx>
      <Ln d="M1099.500 570H1157.500" w={1.500} /><Ln d="M1099.500 572.500H1157.500" />

      {/* notes */}
      <Tx x={1060} y={654} z={9} c={GRN} b>说</Tx><Tx x={1101.500} y={654} z={9} c={GRN} b>明</Tx>
      <Ln d="M1051.500 661.500H1102.500" w={2.500} />
      {[
        [1002.700, 671.700, 134, '1、本工程为深圳某景园19、22、27栋雨棚施工图。'],
        [1011.700, 684, 78, '本工程抗震设防7度，II类场地。'],
        [1002.700, 698, 36, '2、设计依据：'],
        [1012.700, 709, 132, '1）、地基基础设计规范(GB50007-2002)'],
        [1012.700, 720.700, 177, '2）、建筑结构荷载规范(GB50009-2001)(2006年版)；'],
        [1012.700, 732.700, 177, '3）、建筑抗震设计规范(GB50011-2001)(2008年版)；'],
        [1012.700, 745, 144, '4）、混凝土结构设计规范(GB50010-2002)；'],
        [1004, 761.700, 229, '3、基础持力层为第2层第四系冲洪积层，基础底标高为-1.500,开挖至基底设计标高,如未达'],
        [1012.700, 774, 212, '第2层第四系冲洪积层,继续至第2层第四系冲洪积层，所中部分采用素混凝土回填至基底设计标高,'],
        [1012.700, 786.700, 125, '开挖时应采取降水措施，尽量减小对地基土的扰动。'],
        [1003.500, 801.700, 190, '4、砼：C25，基础垫层：C10；钢筋：Φ为HPB235钢,Φ为HRB335钢。'],
        [1003.500, 814, 167, '5、钢筋保护层：柱为30mm，地梁为25mm，基础为40mm。'],
        [1003.500, 825.700, 213, '6、钢筋接长一律采用电焊，单面焊10d（d为钢筋直径），对HPB235钢，焊条采用'],
        [1015, 838, 116, 'E43型，对HRB335级钢，焊条采用E50型。'],
        [1004, 850, 109, '7、钢柱与基础的连接件及钢筋由柱脚大样图。'],
      ].map(([x, y, w, t]) => <Tx key={y} x={x} y={y} z={8.500} c="#c4c4c4" w={w} a="start">{t}</Tx>)}

      {/* title block */}
      <rect x="1120.700" y="1060.700" width="314.300" height="63" fill="none" stroke={GRN} strokeWidth="1.200" />
      <Ln w={1.200} d="M1120.700 1087.300H1312.700M1120.700 1099H1312.700M1120.700 1111.700H1312.700M1312.700 1074.300H1435M1312.700 1086.700H1435M1312.700 1111H1435M1147 1087.300V1124M1185 1087.300V1124M1211.700 1087.300V1124M1250 1087.300V1124M1275.700 1087.300V1124M1312.700 1060.700V1124M1340 1060.700V1124M1374 1111V1124M1401.700 1111V1124" />
      {[[1134, 1093.300, '工程负责人', 22], [1134, 1105.500, '审  定'], [1134, 1117.700, '审  核'], [1198.300, 1093.300, '专业负责人', 23], [1198.300, 1105.500, '校  对'], [1198.300, 1117.700, '设  计'], [1262.300, 1093.300, '设计号'], [1262.300, 1105.500, '日  期'], [1262.300, 1117.700, '图  号'], [1326, 1068.300, '建设单位'], [1326, 1080.700, '工程名称'], [1326, 1094, '图  纸'], [1326, 1103.300, '内  容'], [1326, 1117.700, '日  期'], [1387.700, 1117.700, '字图号']].map(([x, y, t, w]) => <Tx key={x + ':' + y} x={x} y={y} z={5.800} c={BK} b w={w}>{t}</Tx>)}
      <Tx x={1292.600} y={1105.500} z={7} c={BK}>结  施</Tx>
      <Tx x={1296} y={1117.700} z={9} c={BK}>G-07</Tx>
      <Tx x={1344} y={1080.700} z={9} c={BK} w={55} a="start">19、22、27栋雨棚</Tx>
      <Tx x={1344} y={1100} z={7.500} c={BK} w={55} a="start">19栋雨棚柱基础布置图</Tx>
      <Tx x={1357} y={1117.700} z={9} c={BK}>2008-11</Tx>

      {/* cross hair and UCS */}
      <Ln d="M31 1179.500H1567M1497.500 155V1209" c="#111" w={1} />
      <Ln d="M55.500 1137V1188M52 1184H103M52 1180.500H60V1188.500H52Z" c="#111" w={1} />
      <Tx x={63} y={1126} z={16} c="#111">Y</Tx><Tx x={113} y={1177} z={16} c="#111">X</Tx>
    </svg>
  );
}

export default function App() {
  return (
    <div className="relative w-[1600px] h-[1269px] overflow-hidden bg-[#212933] text-[#d4d7dc] text-[12px] leading-none flex flex-col [font-family:'Noto_Sans','Noto_Sans_CJK_SC',sans-serif]">
      {/* title bar */}
      <div className="h-[30px] flex items-center shrink-0 pl-[14px]">
        <div className="w-[23px] h-[20px] flex items-center justify-center bg-[#c7153a] border-b-2 border-[#7c0f26] text-white text-[17px] font-bold">A</div>
        <span className="ml-[3px] mr-[5px]"><Cr c="border-t-[#e2e4e8]" /></span>
        <div className="flex items-center w-[157px]">
          {['new', 'open', 'save', 'saveas', 'phone', 'phone2'].map(n => <span key={n} className="w-[22px] flex justify-center shrink-0"><Ic n={n} s={18} /></span>)}
          <span className="w-[22px] ml-[3px] flex justify-center shrink-0"><Ic n="print" s={18} /></span>
        </div>
        <span className="ml-[1px] w-[20px] flex justify-center"><Ic n="undo" s={17} /></span>
        <span className="w-[14px] flex justify-center"><Cr /></span>
        <span className="ml-[2px] w-[20px] flex justify-center"><Ic n="redoG" s={17} /></span>
        <span className="w-[14px] flex justify-center"><Cr c="border-t-[#8a909a]" /></span>
        <span className="w-[12px] flex flex-col items-center gap-[2px]"><span className="w-[8px] h-px bg-[#d4d7dc]" /><Cr /></span>
        <span className="ml-[6px]"><Ic n="plane" s={18} /></span>
        <span className="ml-[2px] text-[#5fb2ea]">共享</span>
        <span className="ml-[185px] w-[135px] whitespace-nowrap text-[#e4e6ea]">Autodesk AutoCAD 2025</span>
        <span className="ml-[15px] w-[150px] whitespace-nowrap text-[#e4e6ea] text-[11.200px]">深圳某景园雨篷结构图.dwg</span>
        <span className="ml-[177px] w-0 h-0 border-y-[4px] border-y-transparent border-l-[4px] border-l-[#e2e4e8]" />
        <div className="ml-[4px] w-[167px] h-[19px] flex items-center px-[2px] bg-[#434c5b] italic text-[#aab0b9] text-[11px]">键入关键字或短语</div>
        <span className="ml-[3px]"><Ic n="mag" s={17} /></span>
        <span className="ml-[6px]"><Ic n="person" s={17} /></span>
        <span className="ml-[3px] text-[#e4e6ea]">登录</span>
        <span className="ml-[55px]"><Cr /></span>
        <span className="ml-[11px]"><Ic n="cart" s={16} /></span>
        <span className="ml-[6px]"><Ic n="acad" s={16} /></span>
        <span className="ml-[3px]"><Cr /></span>
        <span className="ml-[8px] w-px h-[18px] bg-[#3d4654]" />
        <span className="ml-[8px]"><Ic n="help" s={17} /></span>
        <span className="ml-[5px]"><Cr /></span>
        <span className="ml-[76px] w-[10px] h-px bg-[#e4e6ea]" />
        <span className="ml-[32px] w-[9px] h-[12px] border border-[#e4e6ea] rounded-[1px]" />
        <span className="ml-[34px] text-[16px] text-[#e4e6ea]">X</span>
      </div>
      {/* menu */}
      <div className="h-[19px] flex items-center shrink-0 pl-[17px] gap-[22.800px] text-[11.500px]">
        {MENU.map(m => <span key={m} className="whitespace-nowrap text-[#c3c7cd]">{m}</span>)}
        <div className="ml-auto mr-[12px] flex items-center">
          <span className="w-[9px] h-px bg-[#c3c7cd]" />
          <span className="ml-[20px] w-[8px] h-[11px] border border-[#c3c7cd] shadow-[1px_-1px_0_#c3c7cd]" />
          <span className="ml-[19px] text-[15px] text-[#c3c7cd]">X</span>
        </div>
      </div>
      <div className="h-px bg-[#3a434f] shrink-0" />
      {/* doc tabs */}
      <div className="h-[24px] flex items-center shrink-0 pl-[18px] relative">
        <Ic n="menu" s={18} />
        <span className="ml-[8px] w-px h-[16px] rotate-[15deg] bg-[#5c6572]" />
        <span className="ml-[11px] text-[#e4e6ea]">开始</span>
        <div className="ml-[8px] w-[160px] h-full flex items-center pl-[15px] bg-[#3b4453] [clip-path:polygon(7px_0,100%_0,calc(100%-7px)_100%,0_100%)] font-bold text-[#eceef1] text-[11px]">
          <span className="w-[117px] whitespace-nowrap">深圳某景园雨篷结构图*</span>
          <span className="ml-[9px] text-[#b0b5bd] text-[13px] font-normal">×</span>
        </div>
        <span className="ml-[7px]"><Ic n="plus" s={16} /></span>
        <span className="ml-[11px] w-px h-[16px] rotate-[15deg] bg-[#5c6572]" />
      </div>
      {/* toolbars */}
      <div className="h-[81px] bg-[#3b4453] shrink-0 flex flex-col pt-[5px] pl-[5px]">
        <div className="h-[21px] flex items-center">
          <Bar className="w-[603px]">
            <Grip />
            <T n="new" /><T n="open" /><T n="save" /><Sp />
            <T n="print" /><T n="preview" /><T n="publish" /><T n="dwf" /><Sp />
            <T n="cut" /><T n="copy" /><T n="paste" /><T n="match" /><T n="brush" /><Sp />
            <T n="undo" /><TC /><T n="redo" /><TC /><Sp />
            <T n="pan" /><T n="zoomrt" /><T n="zoomwin" /><T n="zoomprev" /><Sp />
            <T n="propsb" /><T n="sheet" /><T n="palette" /><T n="paper" /><T n="markup" /><T n="calc" /><Sp />
            <T n="help" />
          </Bar>
          <Bar className="ml-[3px] w-[375px]">
            <Grip />
            <span className="w-[19px] flex justify-center"><Ic n="layer" s={17} /></span>
            <Sel className="w-[281px] pl-[4px] shrink-0">
              <Ic n="bulb" s={16} /><span className="w-[2px]" /><Ic n="sun" s={16} /><span className="w-[4px]" /><Ic n="freeze" s={16} /><span className="w-[1px]" /><Ic n="lock" s={16} />
              <span className="ml-[2px] w-[11px] h-[13px] bg-[#00ff00] border border-[#777]" />
              <span className="ml-[6px]">dim</span>
            </Sel>
            <T n="lstack" /><T n="lprev" /><T n="lstate" />
          </Bar>
          <Grip />
          <Sel className="ml-[1px] w-[142px] pl-[4px] shrink-0 border border-[#2c3440]">
            <span className="w-[12px] h-[13px] bg-[#00ff00] border border-[#777]" /><span className="ml-[3px]">ByLayer</span>
          </Sel>
          <Sel className="ml-[4px] w-[151px] pl-[5px] shrink-0 border border-[#2c3440]">
            <span className="w-[56px] h-px bg-black" /><span className="ml-[5px]">ByLayer</span>
          </Sel>
          <Sel className="ml-[5px] w-[118px] pl-[5px] shrink-0 border border-[#2c3440]">
            <span className="w-[33px] h-px bg-black" /><span className="ml-[5px]">ByLayer</span>
          </Sel>
          <div className="relative ml-[5px] w-[113px] h-full flex items-center pl-[10px] shrink-0 border border-[#2c3440] bg-[#e8e9eb] text-[#8b8f96]">ByColor
            <svg width="10" height="6" viewBox="0 0 10 6" className="absolute right-[4px] top-[8px]"><path d="M1 1l4 4 4-4" stroke="#aaa" fill="none" /></svg>
          </div>
        </div>
        <div className="h-[21px] mt-[4px] flex items-center">
          <Bar className="w-[600px]">
            <Grip />
            <T n="dlin" /><T n="dali" /><T n="darc" /><T n="dord" /><Sp w8 />
            <T n="drad" /><T n="djog" /><T n="ddia" /><T n="dang" /><Sp w8 />
            <T n="qdim" /><T n="dbase" /><T n="dcont" /><T n="dspace" /><T n="dbreak" /><Sp w8 />
            <T n="tol" /><T n="cmark" /><T n="insp" /><T n="jog" /><Sp w8 />
            <T n="dedit" /><T n="dtext" /><T n="dupd" />
            <div className="ml-[6px] relative w-[113px] h-full flex items-center pl-[18px] bg-white text-black shrink-0">dim-10
              <svg width="10" height="6" viewBox="0 0 10 6" className="absolute right-[4px] top-[8px]"><path d="M1 1l4 4 4-4" stroke="#666" fill="none" /></svg>
            </div>
            <T n="dstyle" />
          </Bar>
          <Bar className="ml-[2px] w-[456px]">
            <Grip />
            <T22 n="box1" /><T22 n="box2" /><T22 n="box3" /><T22 n="slice" /><T22 n="addm" /><T22 n="cube" /><T22 n="cubex" /><T22 n="rev" /><T22 n="cone" /><T22 n="cube2" /><T22 n="cube3" /><Sp />
            <T n="solid1" /><T n="solid2" /><T n="solid3" /><T n="solid4" /><Sp />
            <T n="plus1" /><T n="broom" /><T n="split" /><T n="vcube" /><T n="chk" />
          </Bar>
        </div>
        <div className="h-[23px] mt-[3px] flex items-center">
          <Bar className="w-[72px]">
            <Grip />
            <T n="plate" /><T n="platechk" /><T n="plate2" />
          </Bar>
        </div>
      </div>
      {/* main */}
      <div className="h-[1054px] flex shrink-0 bg-[#3b4453]">
        <div className="w-[31px] shrink-0 pl-[4px]">
          <div className="w-[23px] h-[421px] border border-[#2c3440] flex flex-col items-center pt-[3px]">
            <span className="w-[14px] h-[2px] mb-[2px] shrink-0 border-t-2 border-dotted border-[#a7acb5]" />
            {LEFT.map(n => <span key={n} className="h-[20.500px] flex items-center shrink-0"><Ic n={n} s={18} /></span>)}
          </div>
        </div>
        <div className="relative w-[1536px] shrink-0 bg-[#888888]">
          <Drawing />
          <div className="absolute left-[3px] top-[6px] text-[11.500px] text-[#e4e4e4] whitespace-nowrap">[+][俯视][二维线框]</div>
          {/* view cube */}
          <div className="absolute left-[1402px] top-[44px] w-[110px] h-[110px] rounded-full border-[8px] border-white/25" />
          <div className="absolute left-[1433px] top-[75px] w-[48px] h-[48px] bg-[#c8c8c8] flex items-center justify-center">
            <div className="w-[30px] h-[30px] bg-[#b2b2b2] flex items-center justify-center text-[22px] text-[#8c8c8c]">上</div>
          </div>
          {[['北', 'left-[1447px] top-[38px]'], ['南', 'left-[1447px] top-[143px]'], ['西', 'left-[1395px] top-[90px]'], ['东', 'left-[1500px] top-[90px]']].map(([t, c]) => <span key={t} className={`absolute ${c} text-[19px] text-white/30`}>{t}</span>)}
          <div className="absolute left-[1435px] top-[179px] w-[45px] h-[16px] rounded-[3px] bg-[#a8a8a8] flex items-center pl-[3px] text-[11px] text-[#dadada]">WCS<span className="ml-[3px] text-[8px]">▽</span></div>
          {/* command */}
          <div className="absolute left-[412px] bottom-[1px] flex flex-col items-start [font-family:'Liberation_Mono','Noto_Sans_CJK_SC',monospace]">
            <div className="flex flex-col items-start gap-[4px] ml-[59px] text-[11.500px] text-[#e0e0e0] mb-[2px] whitespace-nowrap">
              <span className="h-[15px] px-[2px] flex items-center bg-[#696969]">当前设置: 编辑模式 = Multiple</span>
              <span className="h-[15px] px-[2px] flex items-center bg-[#696969]">选择注释对象或 [放弃(U)/模式(M)]: *取消*</span>
              <span className="h-[15px] px-[2px] flex items-center bg-[#696969]">命令: *取消*</span>
            </div>
            <div className="w-[713px] h-[24px] flex items-center bg-[#3b4453] rounded-[2px]">
              <span className="ml-[4px] w-[5px] h-[17px] border-x border-dotted border-[#c8ccd2]" />
              <span className="ml-[6px] text-[13px] text-[#d8dade]">✕</span>
              <svg width="16" height="18" viewBox="0 0 16 18" className="ml-[5px]"><path d="M2 17L9 8C8 4 10 2 13 1l-1 3 2 1 1-2c1 3-1 6-4 6l-6 8z" fill="#d8dade" /></svg>
              <div className="ml-[5px] flex-1 h-full flex items-center bg-[#dcdcdc] rounded-r-[2px] relative">
                <svg width="16" height="14" viewBox="0 0 16 14" className="ml-[3px]"><rect x=".5" y=".5" width="15" height="13" fill="#555" stroke="#333" /><path d="M3 5l3 2-3 2M7 10h4" stroke="#eee" fill="none" /></svg>
                <span className="ml-[2px]"><Cr c="border-t-[#555]" /></span>
                <span className="ml-[10px] italic text-[12.500px] text-[#9a9a9a] [font-family:'Noto_Sans_CJK_SC',sans-serif]">键入命令</span>
                <span className="absolute right-[4px] top-[10px] w-0 h-0 border-x-[4px] border-x-transparent border-b-[5px] border-b-[#777]" />
              </div>
            </div>
          </div>
        </div>
        <div className="w-[33px] shrink-0 pl-[3px]">
          <div className="w-[24px] h-[379px] border border-[#2c3440] flex flex-col items-center pt-[3px]">
            <span className="w-[14px] h-[2px] mb-[4px] shrink-0 border-t-2 border-dotted border-[#a7acb5]" />
            {RIGHT.map(n => <span key={n} className="h-[20.300px] flex items-center shrink-0"><Ic n={n} s={18} /></span>)}
          </div>
        </div>
      </div>
      <div className="h-[4px] bg-[#3b4453] shrink-0" />
      {/* layout tabs */}
      <div className="h-[27px] flex items-center shrink-0 pl-[18px] pb-[3px]">
        <Ic n="menu" s={18} />
        <span className="ml-[8px] w-px h-[16px] rotate-[15deg] bg-[#5c6572]" />
        <span className="ml-[11px] text-[#e4e6ea] font-bold text-[11.500px]">模型</span>
        <div className="ml-[8px] w-[60px] h-[24px] flex items-center pl-[15px] bg-[#3b4453] [clip-path:polygon(7px_0,100%_0,calc(100%-7px)_100%,0_100%)] font-bold text-[#eceef1] text-[11.500px]">布局1</div>
        <span className="ml-[6px]"><Ic n="plus" s={16} /></span>
        <span className="ml-[11px] w-px h-[16px] rotate-[15deg] bg-[#5c6572]" />
      </div>
      {/* status bar */}
      <div className="h-[24px] flex items-center shrink-0 pl-[5px] gap-[2px]">
        <Grp className="w-[381px]" />
        <Grp className="w-[142px] pl-[4px] text-[#e4e6ea] whitespace-nowrap text-[11.300px]">2392592.0, 860040.3, 0.0</Grp>
        <Grp className="w-[28px] justify-center text-[#e4e6ea]">模型</Grp>
        <Grp className="w-[61px]"><SI n="grid" /><SI n="snap" /><SC /></Grp>
        <Grp className="ml-[1px] w-[205px]">
          <SI n="infer" /><span className="w-[3px]" /><Blue n="dyn" /><SI n="ortho" /><SI n="polar" /><SC /><span className="w-[3px]" /><SI n="iso" /><SC /><SI n="ang" /><span className="w-[3px]" /><Blue n="ucsb" /><SC />
        </Grp>
        <Grp className="w-[106px]">
          <SI n="lw" /><Blue n="trans" /><span className="w-[4px]" /><SI n="cycle" /><SI n="o3d" /><SC />
        </Grp>
        <Grp className="w-[100px]">
          <Blue n="ducs" /><SI n="filt" /><SC /><Blue n="gizmo" /><SC />
        </Grp>
        <Grp className="w-[202px]">
          <SI n="ann" /><SI n="annA" /><SI n="annB" /><SI n="lockS" /><SI n="fulls" />
          <span className="ml-[3px] w-[49px] text-[#e4e6ea] text-[11.300px]">0.002291</span>
          <SC /><Blue n="annb" />
        </Grp>
        <Grp className="w-[37px]"><SI n="gear" /><SC /></Grp>
        <Grp className="w-[22px]"><SI n="plus" /></Grp>
        <Grp className="w-[93px] relative"><SI n="ruler" /><span className="ml-[5px] text-[#e4e6ea]">小数</span><span className="absolute right-[7px] top-[10px]"><Cr /></span></Grp>
        <Grp className="w-[22px]"><SI n="qprop" /></Grp>
        <Grp className="w-[37px]"><SI n="lay" /><SC /></Grp>
        <Grp className="w-[22px]"><SI n="iso2" /></Grp>
        <Blue n="hw" />
        <Grp className="w-[22px]"><SI n="clean" /></Grp>
        <Grp className="ml-[4px] w-[24px]"><SI n="fit" /></Grp>
        <Grp className="w-[22px]"><SI n="menu" /></Grp>
      </div>

      {/* watermark */}
      <div className="absolute inset-0 overflow-hidden pointer-events-none">
        {MARKS.map(([x, y]) => (
          <span key={x + '_' + y} style={{ left: x, top: y - 25 }} className="absolute origin-[left_center] rotate-[-43.700deg] whitespace-nowrap text-[35px] leading-[50px] text-white/[.17] [font-family:'Liberation_Sans','Noto_Sans_CJK_SC',sans-serif]">知末网 www.znzmo.com</span>
        ))}
        <span className="absolute left-[1405px] top-[1128px] text-[62px] leading-[76px] text-white/85 whitespace-nowrap [font-family:'Noto_Sans_CJK_SC',sans-serif]">知末</span>
        <span className="absolute left-[1361px] top-[1212px] text-[31.500px] leading-[34px] font-bold text-white whitespace-nowrap [font-family:'Liberation_Sans',sans-serif]">ID: 1180994953</span>
      </div>
      {/* window frame */}
      <div className="absolute inset-0 border-2 border-[#0c85c9] rounded-[5px] pointer-events-none" />
    </div>
  );
}
